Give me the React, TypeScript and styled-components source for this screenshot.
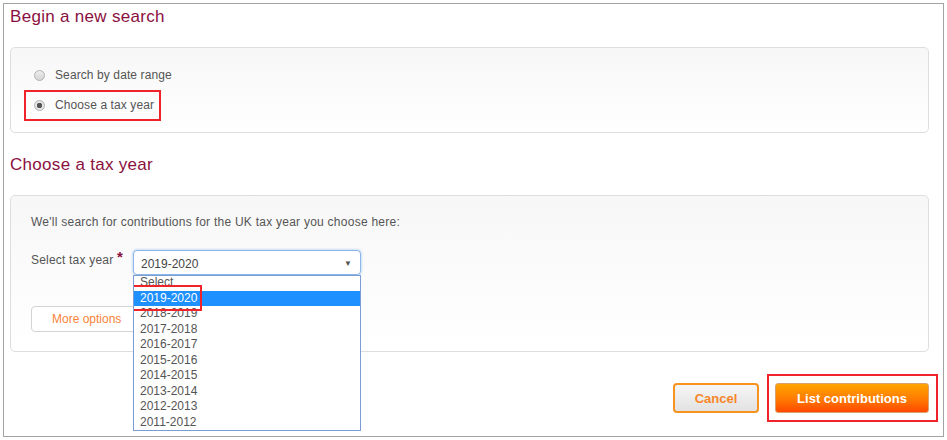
import React from "react";
import styled, { createGlobalStyle } from "styled-components";

const years = [
	"Select",
	"2019-2020",
	"2018-2019",
	"2017-2018",
	"2016-2017",
	"2015-2016",
	"2014-2015",
	"2013-2014",
	"2012-2013",
	"2011-2012",
];

function App() {
	return (
		<>
			<GlobalStyle />
			<Frame>
				<Heading>Begin a new search</Heading>
				<Panel $height={86}>
					<RadioList>
						<RadioRow>
							<Radio />
							<span>Search by date range</span>
						</RadioRow>
						<RadioRow>
							<Marked>
								<Radio $checked />
								<span>Choose a tax year</span>
							</Marked>
						</RadioRow>
					</RadioList>
				</Panel>

				<Heading>Choose a tax year</Heading>
				<Panel $height={157}>
					<Intro>
						We'll search for contributions for the UK tax year you choose here:
					</Intro>
					<FieldRow>
						<FieldLabel>
							Select tax year <Required>*</Required>
						</FieldLabel>
						<SelectWrap>
							<SelectBox>
								<span>2019-2020</span>
								<Arrow>▼</Arrow>
							</SelectBox>
							<Dropdown>
								{years.map((y, i) => (
									<Option key={y} $active={i === 1}>
										{i === 1 ? <MarkedOption>{y}</MarkedOption> : y}
									</Option>
								))}
							</Dropdown>
						</SelectWrap>
					</FieldRow>
					<MoreButton>More options</MoreButton>
				</Panel>

				<Actions>
					<CancelButton>Cancel</CancelButton>
					<PrimaryWrap>
						<PrimaryButton>List contributions</PrimaryButton>
					</PrimaryWrap>
				</Actions>
			</Frame>
		</>
	);
}

const GlobalStyle = createGlobalStyle`
	body {
		margin: 0;
		background: #fff;
		font-family: "Liberation Sans", Arial, sans-serif;
		color: #555;
	}
`;

const Frame = styled.div`
	margin: 3px;
	width: 941px;
	height: 434px;
	box-sizing: border-box;
	border: 1px solid #a3a3a3;
	padding: 0 14px 0 6px;
`;

const Heading = styled.h2`
	margin: 0;
	padding-top: 3px;
	height: 43px;
	box-sizing: border-box;
	font-size: 17px;
	line-height: 20px;
	letter-spacing: 0.3px;
	font-weight: normal;
	color: #8a1040;
`;

const Panel = styled.section<{ $height: number }>`
	height: ${(p) => p.$height}px;
	box-sizing: border-box;
	border: 1px solid #dedede;
	border-radius: 5px;
	background: linear-gradient(#f7f7f7, #ffffff);
	margin-bottom: 19px;
	padding: 0 20px;

	& + & {
		margin-bottom: 0;
	}
`;

const RadioList = styled.div`
	display: flex;
	flex-direction: column;
	gap: 16px;
	padding-top: 20px;
`;

const RadioRow = styled.label`
	display: flex;
	align-items: center;
	height: 14px;
	font-size: 12px;
	letter-spacing: 0.1px;
	color: #555;
	padding-left: 3px;
`;

const Marked = styled.span`
	position: relative;
	display: flex;
	align-items: center;

	&::after {
		content: "";
		position: absolute;
		inset: -8px -7px -9px -10px;
		border: 2px solid #f0222a;
	}
`;

const Radio = styled.span<{ $checked?: boolean }>`
	width: 11px;
	height: 11px;
	box-sizing: border-box;
	border-radius: 50%;
	border: 1px solid #b0b0b0;
	background: ${(p) =>
		p.$checked
			? "radial-gradient(circle, #555 0 2.5px, #e6e6e6 3px)"
			: "linear-gradient(#eee, #d4d4d4)"};
	margin-right: 10px;
	flex-shrink: 0;
`;

const Intro = styled.p`
	margin: 0;
	padding-top: 19px;
	font-size: 12px;
	line-height: 14px;
	letter-spacing: 0.25px;
	color: #555;
`;

const FieldRow = styled.div`
	display: flex;
	align-items: flex-start;
	margin-top: 21px;
`;

const FieldLabel = styled.label`
	width: 102px;
	font-size: 12px;
	line-height: 14px;
	letter-spacing: 0.2px;
	padding-top: 3px;
	color: #555;
	white-space: nowrap;
`;

const Required = styled.span`
	color: #8a1040;
	font-size: 15px;
	font-weight: bold;
	vertical-align: top;
	position: relative;
	top: -3px;
`;

const SelectWrap = styled.div`
	position: relative;
	z-index: 2;
`;

const SelectBox = styled.div`
	width: 228px;
	height: 25px;
	box-sizing: border-box;
	border: 1px solid #8db6e8;
	border-radius: 4px;
	box-shadow: 0 0 3px rgba(100, 160, 230, 0.6);
	background: #fff;
	display: flex;
	align-items: center;
	justify-content: space-between;
	padding: 2px 8px 0 7px;
	font-size: 12px;
	color: #444;
`;

const Arrow = styled.span`
	font-size: 8px;
	color: #555;
`;

const Dropdown = styled.ul`
	position: absolute;
	top: 25px;
	left: 0;
	width: 228px;
	height: 156px;
	box-sizing: border-box;
	margin: 0;
	padding: 0;
	list-style: none;
	background: #fff;
	border: 1px solid #7c9dd4;
	overflow: hidden;
	font-size: 12px;
	color: #555;

	& > li:first-child {
		margin-top: -1px;
	}
`;

const Option = styled.li<{ $active?: boolean }>`
	height: 15.5px;
	line-height: 15.5px;
	padding-left: 6px;
	background: ${(p) => (p.$active ? "#1e90ff" : "transparent")};
	color: ${(p) => (p.$active ? "#fff" : "#555")};
`;

const MarkedOption = styled.span`
	position: relative;

	&::after {
		content: "";
		position: absolute;
		inset: -6px -5px -6px -8px;
		border: 2px solid #f0222a;
	}
`;

const MoreButton = styled.button`
	display: block;
	margin-top: 31px;
	width: 112px;
	height: 26px;
	box-sizing: border-box;
	border: 1px solid #d4d4d4;
	border-radius: 4px;
	background: #fff;
	font-family: inherit;
	font-size: 12px;
	color: #f7843a;
	text-align: left;
	padding-left: 20px;
`;

const Actions = styled.div`
	display: flex;
	justify-content: flex-end;
	align-items: center;
	gap: 16px;
	margin-top: 31px;
`;

const CancelButton = styled.button`
	width: 86px;
	height: 30px;
	box-sizing: border-box;
	border: 2px solid #f79420;
	border-radius: 4px;
	background: linear-gradient(#f6f6f6, #e2e2e2);
	font-family: inherit;
	font-size: 13px;
	font-weight: bold;
	color: #f7862a;
`;

const PrimaryWrap = styled.div`
	position: relative;

	&::after {
		content: "";
		position: absolute;
		inset: -9px -9px -9px -8px;
		border: 2px solid #f0222a;
	}
`;

const PrimaryButton = styled.button`
	display: block;
	width: 154px;
	height: 30px;
	box-sizing: border-box;
	border: 1px solid #d9a070;
	border-radius: 3px;
	background: linear-gradient(#ffa500, #ff7a00 55%, #ff4800);
	font-family: inherit;
	font-size: 13px;
	font-weight: bold;
	color: #fff;
`;

export default App;
